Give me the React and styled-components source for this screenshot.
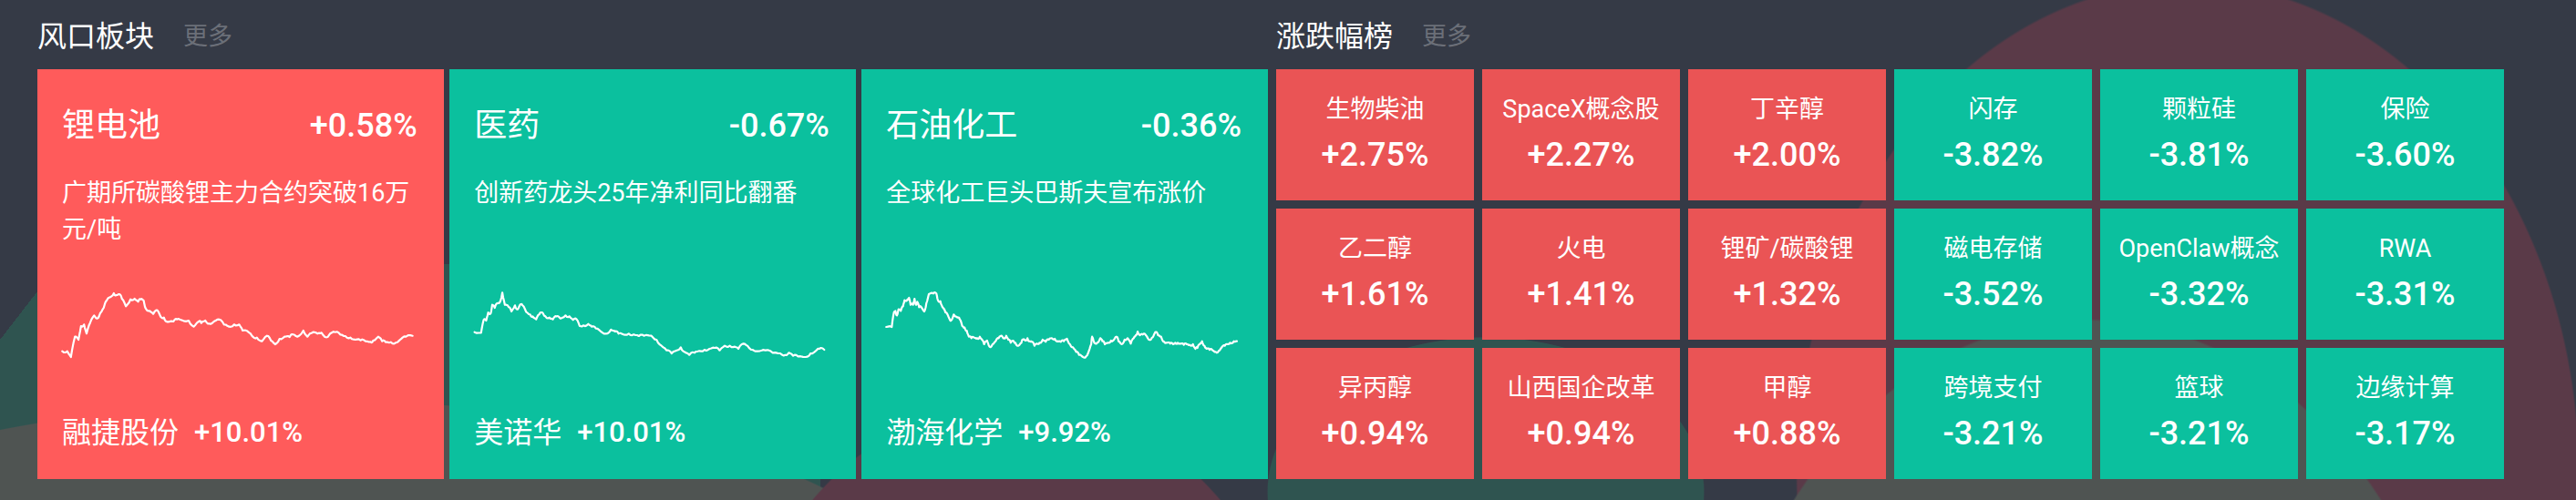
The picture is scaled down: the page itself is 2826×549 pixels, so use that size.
import React from "react";
import styled, { createGlobalStyle } from "styled-components";

const GlobalStyle = createGlobalStyle`
  html, body { margin: 0; padding: 0; background: #353a46; }
  body { font-family: Roboto, "Noto Sans CJK SC", sans-serif; }
`;

const RED = "#5a3a48";
const TEAL = "#2f5450";
const GREY = "#4f5452";

const Page = styled.div`
  width: 2826px;
  height: 549px;
  box-sizing: border-box;
  padding: 0 79px 0 41px;
  display: flex;
  gap: 9px;
  color: #fff;
  background-color: #353a46;
  background-repeat: no-repeat;
  background-image:
    radial-gradient(ellipse 420px 550px at 2290px 900px, ${GREY} 99.5%, transparent 100%),
    radial-gradient(ellipse 430px 540px at 2400px 520px, ${RED} 99.5%, transparent 100%),
    radial-gradient(ellipse 240px 170px at 1630px 540px, ${TEAL} 99.5%, transparent 100%),
    radial-gradient(ellipse 310px 350px at 1115px 790px, ${RED} 99.5%, transparent 100%),
    radial-gradient(ellipse 650px 200px at 350px 640px, ${GREY} 99.5%, transparent 100%),
    linear-gradient(127.7deg, transparent 50.8px, ${TEAL} 50.8px);
  background-size: 100% 100%, 100% 100%, 100% 100%, 100% 100%, 100% 100%, 900px 259px;
  background-position: 0 0, 0 0, 0 0, 0 0, 0 0, 0 290px;
`;

const Section = styled.section`
  display: flex;
  flex-direction: column;
  width: ${(p) => p.$w}px;
  flex: none;
`;

const Header = styled.div`
  height: 76px;
  box-sizing: border-box;
  padding-top: 4px;
  display: flex;
  align-items: center;
`;

const Title = styled.h2`
  margin: 0;
  font-size: 32px;
  font-weight: 400;
  line-height: 1;
  color: #fff;
`;

const More = styled.span`
  margin-left: 32px;
  font-size: 27px;
  line-height: 1;
  color: #6b6f78;
`;

const CardGrid = styled.div`
  display: grid;
  grid-template-columns: repeat(3, 1fr);
  column-gap: 6.5px;
  height: 450px;
`;

const Card = styled.div`
  background: ${(p) => (p.$up ? "#ff5b5b" : "#0bc09e")};
  box-sizing: border-box;
  padding: 38px 29px 31px 27px;
  display: flex;
  flex-direction: column;
  min-width: 0;
`;

const CardHead = styled.div`
  display: flex;
  justify-content: space-between;
  align-items: center;
  height: 48px;
`;

const CardName = styled.span`
  font-size: 36px;
  line-height: 48px;
`;

const CardPct = styled.span`
  font-size: 36px;
  line-height: 48px;
  font-weight: 500;
`;

const Desc = styled.p`
  margin: 30px 0 0;
  font-size: 27px;
  line-height: 40px;
`;

const Chart = styled.svg`
  display: block;
  width: 100%;
  height: 90px;
  margin-top: auto;
  margin-bottom: 55px;
  overflow: visible;
`;

const Foot = styled.div`
  display: flex;
  align-items: center;
  height: 40px;
`;

const FootName = styled.span`
  font-size: 32px;
  line-height: 40px;
`;

const FootPct = styled.span`
  margin-left: 17px;
  font-size: 31px;
  line-height: 40px;
  font-weight: 500;
`;

const TileGrid = styled.div`
  display: grid;
  grid-template-columns: repeat(6, 1fr);
  grid-template-rows: repeat(3, 144px);
  gap: 9px;
`;

const Tile = styled.div`
  background: ${(p) => (p.$up ? "#ea5455" : "#0bc09e")};
  display: flex;
  flex-direction: column;
  align-items: center;
  justify-content: center;
  padding-bottom: 3px;
  box-sizing: border-box;
  min-width: 0;
`;

const TileName = styled.span`
  font-size: 27px;
  line-height: 36px;
  white-space: nowrap;
`;

const TilePct = styled.span`
  margin-top: 10px;
  font-size: 36px;
  line-height: 44px;
  font-weight: 500;
`;

const raw1 = [15,233,25,233,32,252,40,185,47,195,52,150,58,145,63,175,70,140,78,115,84,125,90,108,97,90,103,65,110,55,117,42,122,48,128,45,133,60,141,85,150,62,158,60,165,70,170,62,176,66,180,92,188,100,195,110,203,98,210,120,216,122,222,136,235,135,242,128,250,130,265,132,275,152,285,135,290,140,298,132,305,142,315,135,325,128,335,145,345,152,355,145,365,145,372,165,385,172,392,185,400,188,410,200,420,182,428,198,436,210,445,192,455,185,465,186,472,178,480,185,492,165,500,185,508,173,520,175,528,172,538,187,545,175,555,170,565,178,575,183,585,188,595,195,605,197,615,200,625,202,630,198,640,185,648,200,655,203,665,203,675,205,685,193,695,185,708,182];

const raw2 = [830,170,843,172,848,130,853,132,857,105,862,108,865,80,870,90,875,75,880,72,885,40,890,80,898,88,903,102,910,82,915,95,920,80,925,82,932,103,940,112,945,118,952,128,958,112,964,105,970,118,978,122,985,128,992,118,1000,125,1010,115,1018,118,1025,130,1032,128,1038,150,1045,148,1055,143,1062,152,1070,158,1080,168,1090,175,1100,162,1108,168,1115,175,1125,178,1135,175,1145,178,1155,183,1165,182,1180,182,1190,195,1200,215,1210,230,1220,240,1230,230,1238,220,1245,235,1255,245,1265,238,1275,232,1285,228,1295,225,1305,222,1315,230,1325,215,1335,215,1345,218,1352,225,1362,208,1370,215,1380,228,1395,232,1405,230,1420,238,1435,240,1445,245,1452,238,1460,248,1470,250,1485,252,1495,240,1505,232,1512,225,1522,228];

const raw3 = [40,153,58,153,65,105,70,100,75,115,80,95,88,100,95,85,100,65,110,62,115,57,120,80,128,80,133,60,138,80,142,70,148,88,155,88,165,102,172,75,180,45,195,43,205,43,210,65,218,68,225,88,235,105,245,120,252,133,262,112,275,122,282,128,290,150,298,155,305,165,312,185,320,190,330,188,340,190,348,185,355,195,362,210,372,198,380,218,390,210,400,200,410,190,420,182,428,190,435,182,442,195,450,205,458,198,465,205,475,215,485,205,490,195,498,198,505,190,512,200,520,202,528,215,535,208,545,205,555,195,565,202,575,195,585,190,595,192,605,200,615,202,625,200,635,192,645,210,655,220,665,235,675,245,688,252,698,250,708,230,715,210,718,185,725,205,735,205,745,190,752,200,760,210,770,205,780,198,790,195,798,185,805,200,815,210,825,195,835,190,845,208,855,190,862,180,868,168,875,180,885,178,895,180,905,195,915,188,922,178,928,170,935,180,945,185,955,202,965,205,975,208,985,210,992,205,1000,205,1010,208,1020,212,1030,210,1040,212,1050,210,1058,225,1065,222,1072,210,1080,200,1088,215,1095,225,1105,228,1115,230,1125,235,1135,232,1145,220,1155,215,1165,210,1172,205,1185,200,1195,200];

function toPoints(raw, sx, ox, seed) {
  const pts = [];
  for (let i = 0; i < raw.length; i += 2) {
    pts.push([raw[i] / sx + ox, raw[i + 1] / 3 - 2]);
  }
  const out = [];
  for (let i = 0; i < pts.length; i++) {
    const [x, y] = pts[i];
    out.push([x, y]);
    if (i < pts.length - 1) {
      const [nx, ny] = pts[i + 1];
      for (let k = 1; k <= 2; k++) {
        const t = k / 3;
        const j = Math.sin((i * 3 + k) * 12.9898 + seed) * 1.3;
        out.push([x + (nx - x) * t, y + (ny - y) * t + j]);
      }
    }
  }
  return out.map(([x, y]) => `${x.toFixed(1)},${y.toFixed(1)}`).join(" ");
}

const cards = [
  {
    up: true,
    name: "锂电池",
    pct: "+0.58%",
    desc: "广期所碳酸锂主力合约突破16万元/吨",
    stock: "融捷股份",
    stockPct: "+10.01%",
    line: toPoints(raw1, 1.802, -8, 1),
  },
  {
    up: false,
    name: "医药",
    pct: "-0.67%",
    desc: "创新药龙头25年净利同比翻番",
    stock: "美诺华",
    stockPct: "+10.01%",
    line: toPoints(raw2, 1.802, -460, 2),
  },
  {
    up: false,
    name: "石油化工",
    pct: "-0.36%",
    desc: "全球化工巨头巴斯夫宣布涨价",
    stock: "渤海化学",
    stockPct: "+9.92%",
    line: toPoints(raw3, 3, -13, 3),
  },
];

const tiles = [
  ["生物柴油", "+2.75%"],
  ["SpaceX概念股", "+2.27%"],
  ["丁辛醇", "+2.00%"],
  ["闪存", "-3.82%"],
  ["颗粒硅", "-3.81%"],
  ["保险", "-3.60%"],
  ["乙二醇", "+1.61%"],
  ["火电", "+1.41%"],
  ["锂矿/碳酸锂", "+1.32%"],
  ["磁电存储", "-3.52%"],
  ["OpenClaw概念", "-3.32%"],
  ["RWA", "-3.31%"],
  ["异丙醇", "+0.94%"],
  ["山西国企改革", "+0.94%"],
  ["甲醇", "+0.88%"],
  ["跨境支付", "-3.21%"],
  ["篮球", "-3.21%"],
  ["边缘计算", "-3.17%"],
];

export default function App() {
  return (
    <>
      <GlobalStyle />
      <Page>
        <Section $w={1350}>
          <Header>
            <Title>风口板块</Title>
            <More>更多</More>
          </Header>
          <CardGrid>
            {cards.map((c) => (
              <Card key={c.name} $up={c.up}>
                <CardHead>
                  <CardName>{c.name}</CardName>
                  <CardPct>{c.pct}</CardPct>
                </CardHead>
                <Desc>{c.desc}</Desc>
                <Chart viewBox="0 0 390 90" preserveAspectRatio="none">
                  <polyline
                    points={c.line}
                    fill="none"
                    stroke="#fff"
                    strokeWidth="2.2"
                    strokeLinejoin="round"
                    strokeLinecap="round"
                  />
                </Chart>
                <Foot>
                  <FootName>{c.stock}</FootName>
                  <FootPct>{c.stockPct}</FootPct>
                </Foot>
              </Card>
            ))}
          </CardGrid>
        </Section>
        <Section $w={1347}>
          <Header>
            <Title>涨跌幅榜</Title>
            <More>更多</More>
          </Header>
          <TileGrid>
            {tiles.map(([n, p]) => (
              <Tile key={n} $up={p.startsWith("+")}>
                <TileName>{n}</TileName>
                <TilePct>{p}</TilePct>
              </Tile>
            ))}
          </TileGrid>
        </Section>
      </Page>
    </>
  );
}
